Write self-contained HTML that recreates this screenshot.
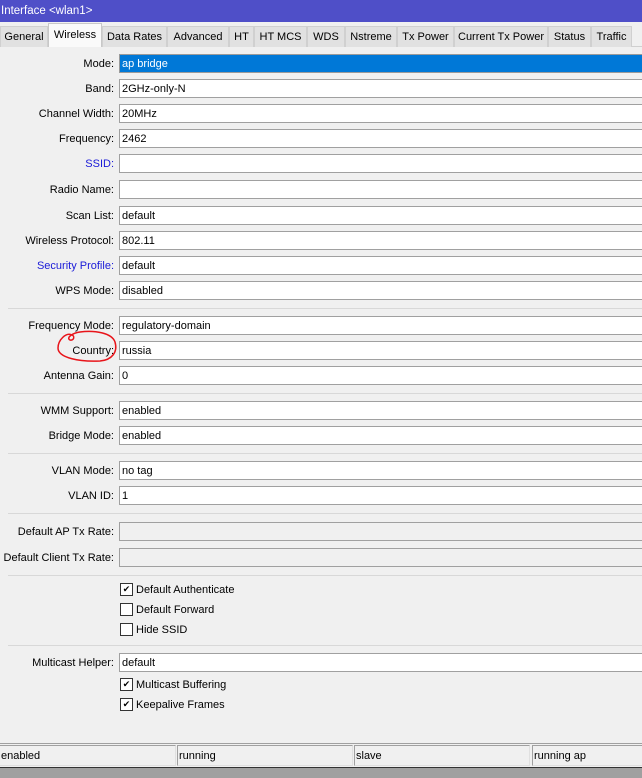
<!DOCTYPE html>
<html><head><style>
*{margin:0;padding:0;box-sizing:border-box}
body{width:642px;height:778px;background:#f0f0f0;font-family:"Liberation Sans",sans-serif;font-size:11px;color:#000;position:relative;overflow:hidden}
div{white-space:nowrap}
.t{position:absolute;left:0;top:0;width:642px;height:22px;background:#4f4fc8;color:#fff;padding:5px 0 0 1px;font-size:11.5px}
.tab{position:absolute;top:26px;height:21px;background:#e1e1e1;border:1px solid #d0d0d0;border-bottom:none;padding:4px 0 0 0;text-align:center}
.tab.a{top:23px;height:24px;background:#fafafa;border-color:#c8c8c8;padding-top:5px}
.l{position:absolute;right:528px;text-align:right;margin-top:1px}
.f{position:absolute;left:119px;width:530px;height:19px;background:#fff;border:1px solid #a0a0a0;border-right:none;padding:3px 0 0 2px}
.f.d{background:#f0f0f0}
.f.s{background:#0078d7;color:#fff;border-color:#9a9a9a}
.sep{position:absolute;left:8px;right:0;height:1px;background:#d8d8d8}
.blue{color:#1a1ad8}
.cb{position:absolute;left:120px;width:13px;height:13px;border:1px solid #333;background:#fff;font-size:9px;line-height:11px;text-align:center}
.cl{position:absolute;left:136px;margin-top:1px}
.sb{position:absolute;top:745px;height:21px;border:1px solid #a0a0a0;border-right-color:#e0e0e0;border-bottom-color:#e0e0e0;padding:4px 0 0 1px}
</style></head><body>
<div class="t">Interface &lt;wlan1&gt;</div>
<div style="position:absolute;left:0;top:46px;width:642px;height:1px;background:#d0d0d0"></div>
<div class="tab" style="left:0;width:48px">General</div>
<div class="tab a" style="left:48px;width:54px">Wireless</div>
<div class="tab" style="left:102px;width:65px">Data Rates</div>
<div class="tab" style="left:167px;width:62px">Advanced</div>
<div class="tab" style="left:229px;width:25px">HT</div>
<div class="tab" style="left:254px;width:53px">HT MCS</div>
<div class="tab" style="left:307px;width:38px">WDS</div>
<div class="tab" style="left:345px;width:52px">Nstreme</div>
<div class="tab" style="left:397px;width:57px">Tx Power</div>
<div class="tab" style="left:454px;width:94px">Current Tx Power</div>
<div class="tab" style="left:548px;width:43px">Status</div>
<div class="tab" style="left:591px;width:41px">Traffic</div>

<div class="l" style="top:57px">Mode:</div><div class="f s" style="top:54px">ap bridge</div>
<div class="l" style="top:82px">Band:</div><div class="f" style="top:79px">2GHz-only-N</div>
<div class="l" style="top:107px">Channel Width:</div><div class="f" style="top:104px">20MHz</div>
<div class="l" style="top:132px">Frequency:</div><div class="f" style="top:129px">2462</div>
<div class="l blue" style="top:157px">SSID:</div><div class="f" style="top:154px"></div>
<div class="l" style="top:183px">Radio Name:</div><div class="f" style="top:180px"></div>
<div class="l" style="top:209px">Scan List:</div><div class="f" style="top:206px">default</div>
<div class="l" style="top:234px">Wireless Protocol:</div><div class="f" style="top:231px">802.11</div>
<div class="l blue" style="top:259px">Security Profile:</div><div class="f" style="top:256px">default</div>
<div class="l" style="top:284px">WPS Mode:</div><div class="f" style="top:281px">disabled</div>
<div class="sep" style="top:308px"></div>
<div class="l" style="top:319px">Frequency Mode:</div><div class="f" style="top:316px">regulatory-domain</div>
<div class="l" style="top:344px">Country:</div><div class="f" style="top:341px">russia</div>
<div class="l" style="top:369px">Antenna Gain:</div><div class="f" style="top:366px">0</div>
<div class="sep" style="top:393px"></div>
<div class="l" style="top:404px">WMM Support:</div><div class="f" style="top:401px">enabled</div>
<div class="l" style="top:429px">Bridge Mode:</div><div class="f" style="top:426px">enabled</div>
<div class="sep" style="top:453px"></div>
<div class="l" style="top:464px">VLAN Mode:</div><div class="f" style="top:461px">no tag</div>
<div class="l" style="top:489px">VLAN ID:</div><div class="f" style="top:486px">1</div>
<div class="sep" style="top:513px"></div>
<div class="l" style="top:525px">Default AP Tx Rate:</div><div class="f d" style="top:522px"></div>
<div class="l" style="top:551px">Default Client Tx Rate:</div><div class="f d" style="top:548px"></div>
<div class="sep" style="top:575px"></div>
<div class="cb" style="top:583px">✔</div><div class="cl" style="top:583px">Default Authenticate</div>
<div class="cb" style="top:603px"></div><div class="cl" style="top:603px">Default Forward</div>
<div class="cb" style="top:623px"></div><div class="cl" style="top:623px">Hide SSID</div>
<div class="sep" style="top:645px"></div>
<div class="l" style="top:656px">Multicast Helper:</div><div class="f" style="top:653px">default</div>
<div class="cb" style="top:678px">✔</div><div class="cl" style="top:678px">Multicast Buffering</div>
<div class="cb" style="top:698px">✔</div><div class="cl" style="top:698px">Keepalive Frames</div>
<svg style="position:absolute;left:0;top:0" width="642" height="778"><path d="M72 335 C66 332 58 340 58 348 C58 358 80 362 100 361 C112 360 118 352 115 342 C112 333 95 330 80 332 C72 333 66 338 70 340 C74 341 75 336 72 335" fill="none" stroke="#e8141a" stroke-width="1.5"/></svg>
<div style="position:absolute;left:0;top:743px;width:642px;height:1px;background:#a0a0a0"></div>
<div class="sb" style="left:-1px;width:177px">enabled</div>
<div class="sb" style="left:177px;width:176px">running</div>
<div class="sb" style="left:354px;width:176px">slave</div>
<div class="sb" style="left:532px;width:112px">running ap</div>
<div style="position:absolute;left:0;top:767px;width:642px;height:1px;background:#333"></div>
<div style="position:absolute;left:0;top:768px;width:642px;height:10px;background:#a0a0a0"></div>
</body></html>
